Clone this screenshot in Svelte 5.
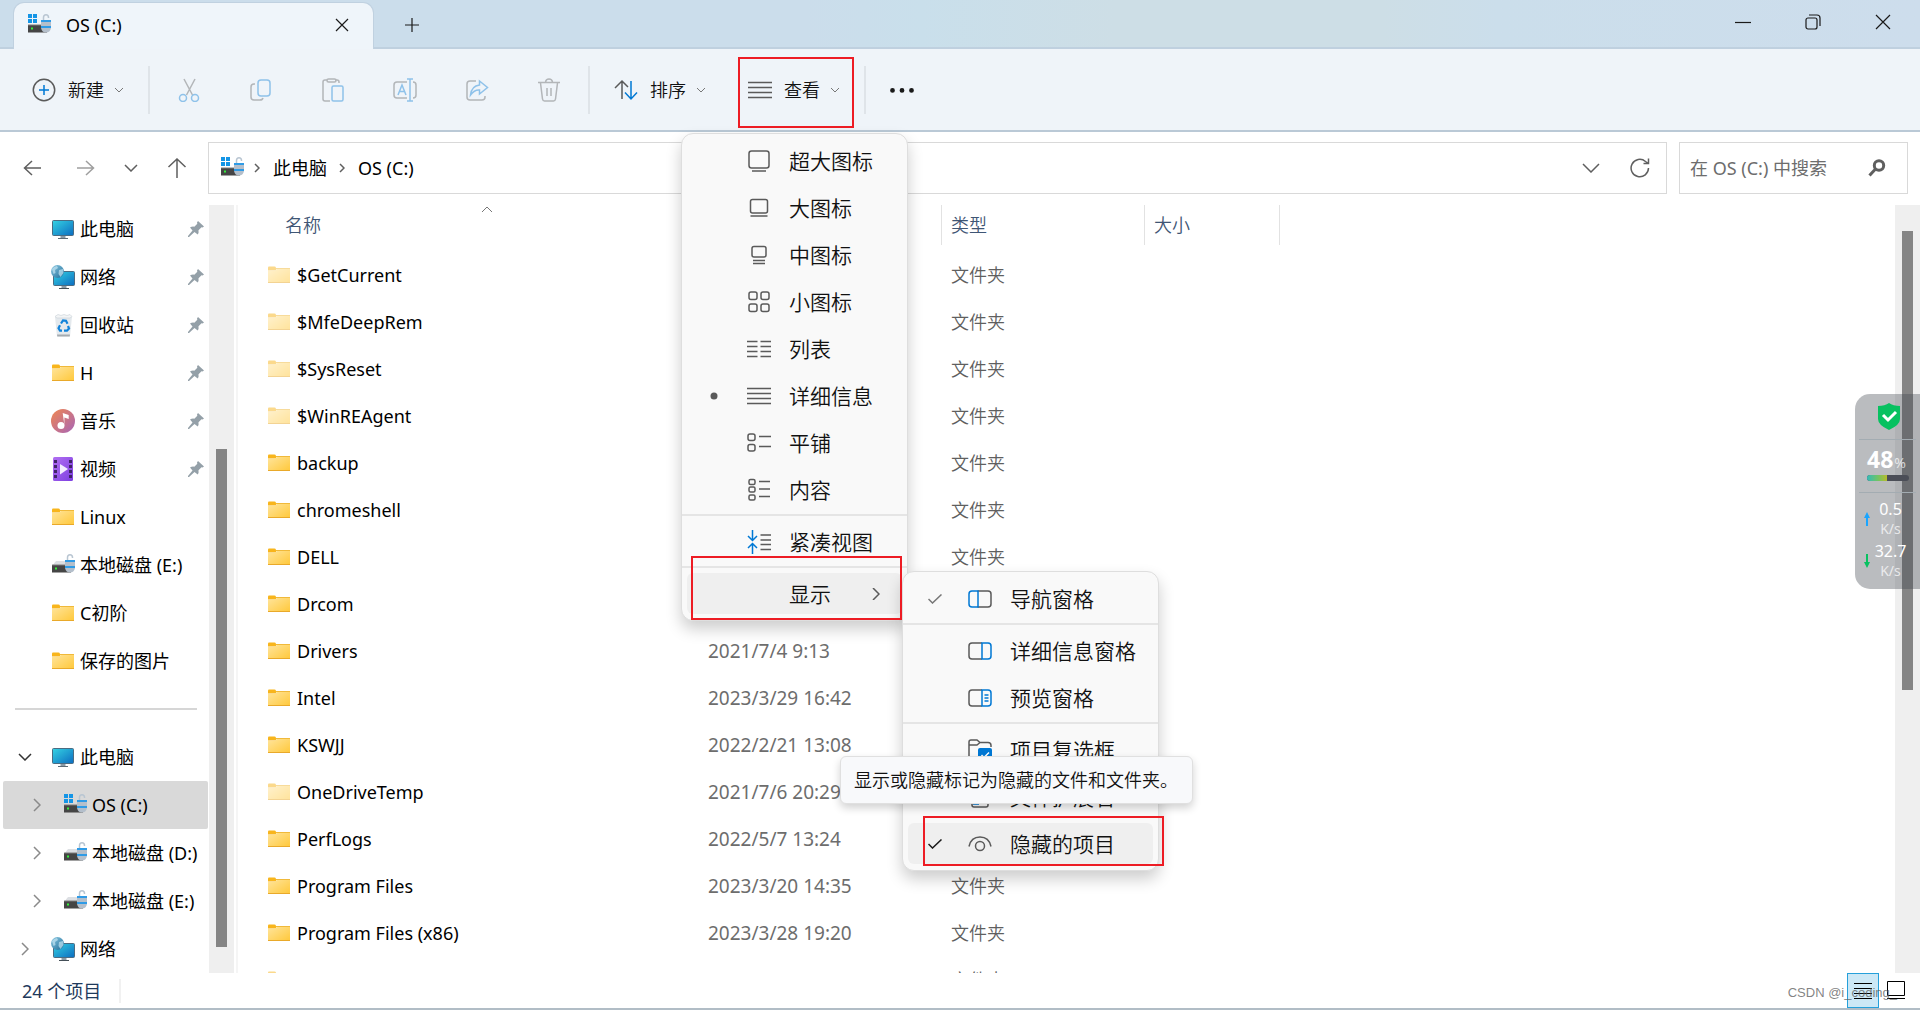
<!-- File explorer window with the view menu open -->
<script lang="ts">
  interface NavEntry {
    name: string;
    icon: string;
    pinned?: boolean;
    level?: number;
    expanded?: boolean;
    selected?: boolean;
  }
  interface MenuEntry {
    label?: string;
    icon?: string;
    mark?: string;
    separator?: boolean;
    active?: boolean;
    children?: MenuEntry[];
    tip?: string;
  }

  const quickAccess: NavEntry[] = [
    { name: '此电脑', icon: 'pc', pinned: true },
    { name: '网络', icon: 'network', pinned: true },
    { name: '回收站', icon: 'bin', pinned: true },
    { name: 'H', icon: 'folder', pinned: true },
    { name: '音乐', icon: 'music', pinned: true },
    { name: '视频', icon: 'video', pinned: true },
    { name: 'Linux', icon: 'folder' },
    { name: '本地磁盘 (E:)', icon: 'disk' },
    { name: 'C初阶', icon: 'folder' },
    { name: '保存的图片', icon: 'folder' },
  ];

  const tree: NavEntry[] = [
    { name: '此电脑', icon: 'pc', level: 0, expanded: true },
    { name: 'OS (C:)', icon: 'osdisk', level: 1, selected: true },
    { name: '本地磁盘 (D:)', icon: 'disk', level: 1 },
    { name: '本地磁盘 (E:)', icon: 'disk', level: 1 },
    { name: '网络', icon: 'network', level: 0 },
  ];

  const files = [
    { name: '$GetCurrent', date: '', hidden: true },
    { name: '$MfeDeepRem', date: '', hidden: true },
    { name: '$SysReset', date: '', hidden: true },
    { name: '$WinREAgent', date: '', hidden: true },
    { name: 'backup', date: '' },
    { name: 'chromeshell', date: '' },
    { name: 'DELL', date: '' },
    { name: 'Drcom', date: '' },
    { name: 'Drivers', date: '2021/7/4 9:13' },
    { name: 'Intel', date: '2023/3/29 16:42' },
    { name: 'KSWJJ', date: '2022/2/21 13:08' },
    { name: 'OneDriveTemp', date: '2021/7/6 20:29', hidden: true },
    { name: 'PerfLogs', date: '2022/5/7 13:24' },
    { name: 'Program Files', date: '2023/3/20 14:35' },
    { name: 'Program Files (x86)', date: '2023/3/28 19:20' },
    { name: 'ProgramData', date: '', hidden: true },
  ];

  const tools = [
    { icon: 'cut', label: '剪切' },
    { icon: 'copy', label: '复制' },
    { icon: 'paste', label: '粘贴' },
    { icon: 'rename', label: '重命名' },
    { icon: 'share', label: '共享' },
    { icon: 'trash', label: '删除' },
  ];

  const viewMenu: MenuEntry[] = [
    { label: '超大图标', icon: 'xl' },
    { label: '大图标', icon: 'large' },
    { label: '中图标', icon: 'medium' },
    { label: '小图标', icon: 'small' },
    { label: '列表', icon: 'list' },
    { label: '详细信息', icon: 'lines', mark: 'dot' },
    { label: '平铺', icon: 'tiles' },
    { label: '内容', icon: 'content' },
    { separator: true },
    { label: '紧凑视图', icon: 'compact' },
    { separator: true },
    {
      label: '显示',
      active: true,
      children: [
        { label: '导航窗格', icon: 'navpane', mark: 'check' },
        { separator: true },
        { label: '详细信息窗格', icon: 'detailpane' },
        { label: '预览窗格', icon: 'previewpane' },
        { separator: true },
        { label: '项目复选框', icon: 'checkboxes' },
        { label: '文件扩展名', icon: 'extension' },
        { label: '隐藏的项目', icon: 'eye', mark: 'check', active: true, tip: '显示或隐藏标记为隐藏的文件和文件夹。' },
      ],
    },
  ];

  // thumb position and size as a share of the track
  const navScroll = { top: 31.8, size: 64.8 };
  const listScroll = { top: 3.4, size: 59.8 };
  const memoryUsed = 48;
</script>

{#snippet chevron(cls: string)}
  <svg class="chevron {cls}" width="10" height="6" viewBox="0 0 10 6"><path d="M1 1l4 4 4-4" /></svg>
{/snippet}

{#snippet place(kind: string)}
  <svg class="place" width="24" height="24" viewBox="0 0 24 24">
    {#if kind === 'folder'}
      <path d="M1 4.500q0-1 1-1h5.500q1 0 1.500 1v3H1z" fill="#f8b51c" />
      <path d="M1 8h7l2-2.500h13V20H1z" fill="url(#folderFill)" />
      <path d="M9 5.500h14" stroke="#f0b93a" />
      <path d="M1 19.500h22" stroke="#e9a92a" />
    {:else if kind === 'pc'}
      <rect x="1.500" y="3.500" width="21" height="15" rx="1" fill="url(#screenFill)" stroke="#4b6c82" />
      <path d="M9.500 19h5v2h-5z" fill="#8b9aa5" />
      <path d="M7 21.500h10" stroke="#5c6a74" />
    {:else if kind === 'network'}
      <rect x="2.500" y="6.500" width="21" height="14" rx="1" fill="url(#screenFill)" stroke="#4b6c82" />
      <path d="M10.500 21h5v2h-5z" fill="#8b9aa5" />
      <path d="M8 23.500h10" stroke="#444f57" />
      <circle cx="6.500" cy="6.500" r="6.500" fill="url(#globeFill)" />
      <path d="M1 4q2-2.500 5-3l1 2-3 2 .5 3-2 1zM8 5l4-1 .5 4-3 4-2-3z" fill="#c3e4f2" opacity=".7" />
    {:else if kind === 'bin'}
      <path d="M4 3.500h17l-2 20H6z" fill="#e4e9ed" />
      <path d="M4 3.500l3-2 3 1 3-1 3 1 3-1 2 2-2 1.500H6z" fill="#f3f5f6" stroke="#cfd6db" stroke-width=".7" />
      <path d="M6 21.500h13l-.3 2H6.300z" fill="#a5abb0" />
      <path d="M10 10.500l2-3 3 .3 1.500 3M17 13l1 2.500-2 2.200h-3M11 17.700H9l-1.500-2.500 1.500-3" fill="none" stroke="#1183da" stroke-width="2.200" />
    {:else if kind === 'music'}
      <circle cx="12" cy="12" r="12" fill="url(#musicFill)" />
      <path d="M11.700 4l6 2v4l-4.300-1.500V16" fill="#fff" />
      <circle cx="10" cy="16.500" r="3.500" fill="#fff" />
    {:else if kind === 'video'}
      <rect x="2" width="20" height="24" rx="1.500" fill="url(#videoFill)" />
      <path d="M4.500 3v19M19.500 3v19" stroke="#402468" stroke-width="3" stroke-dasharray="3 2" />
      <path d="M9 7l8 5-8 5.500z" fill="#f3ecff" />
    {:else if kind === 'disk' || kind === 'osdisk'}
      {#if kind === 'osdisk'}
        <path d="M1 1h4v4H1zM6 1h4v4H6zM1 6h4v4H1zM6 6h4v4H6z" fill="#1495e6" />
      {:else}
        <path d="M5 8h14l4 5H1z" fill="#dcdfe3" />
      {/if}
      <rect x="1" y="12" width="19" height="7.500" fill="#454545" />
      <path d="M1 12h19" stroke="#7d7d7d" />
      <rect x="4" y="14.500" width="2" height="2" fill="#35f03c" />
      <path d="M16.500 8V4.500q0-2.800 2.500-2.800t2.500 2.800V5" fill="none" stroke="#b9c6d2" stroke-width="1.500" />
      <path d="M14 7h10v8q-1 4.500-5 4.500t-5-4.500z" fill="#b4bfcb" />
      <path d="M14 8h10M14 14h10" stroke="#2f9be6" stroke-width="2" />
    {/if}
  </svg>
{/snippet}

{#snippet glyph(kind: string)}
  <svg class="glyph" width="24" height="24" viewBox="0 0 24 24">
    {#if kind === 'new'}
      <circle cx="12" cy="12" r="10.700" /><path class="blue" d="M12 7v10M7 12h10" />
    {:else if kind === 'cut'}
      <path d="M7 1l8.500 16M18 1L9.500 17" /><circle class="blue" cx="6" cy="20" r="3.500" /><circle class="blue" cx="18" cy="20" r="3.500" />
    {:else if kind === 'copy'}
      <path d="M6 6H5Q2 6 2 9v10q0 3 3 3h6q2.500 0 3-2" /><rect class="blue" x="9" y="2" width="12" height="16" rx="3" />
    {:else if kind === 'paste'}
      <path d="M9 23H4q-2 0-2-2V4q0-2 2-2h2M14 2h2q2 0 2 2v1" /><rect x="6" y="1" width="9" height="3" rx="1.500" /><rect class="blue" x="11" y="8" width="11" height="15" rx="1.500" />
    {:else if kind === 'rename'}
      <path d="M14 4H4Q1 4 1 7v10q0 3 3 3h10M20 4q3 0 3 3v10q0 3-3 3" /><path class="blue" d="M5 17l4-10 4 10M6.500 13.500h5M17 1v22M14 1h6M14 23h6" />
    {:else if kind === 'share'}
      <path d="M11 3H5Q2 3 2 6v13q0 3 3 3h12q3 0 3-3v-1" /><path class="blue" d="M14.500 3l8 6.500-8 6.500v-4q-5-.5-9 5 1-9 9-10z" />
    {:else if kind === 'trash'}
      <path d="M1 4.500h22M3.500 5l2 16q.3 2 2 2h9q1.700 0 2-2l2-16M8.500 4Q9 1 12 1t3.500 3M10 10v8M14 10v8" />
    {:else if kind === 'sort'}
      <path d="M8 21V3M1 10l7-7 6 6" /><path class="blue" d="M17 3v18M11 14.500l6 6.500 6-6.500" />
    {:else if kind === 'lines'}
      <path d="M0 4.500h24M0 9.500h24M0 14.500h24M0 19.500h24" />
    {:else if kind === 'more'}
      <path class="solid" d="M2.500 10a2.400 2.400 0 1 1 0 4.800a2.400 2.400 0 1 1 0-4.800M12 10a2.400 2.400 0 1 1 0 4.800a2.400 2.400 0 1 1 0-4.800M21.500 10a2.400 2.400 0 1 1 0 4.800a2.400 2.400 0 1 1 0-4.800" />
    {:else if kind === 'xl'}
      <rect x="2" y="2" width="20" height="17" rx="2.500" /><path d="M5 22h14" />
    {:else if kind === 'large'}
      <rect x="3.500" y="3.500" width="17" height="13.500" rx="2" /><path d="M3.500 20h17" />
    {:else if kind === 'medium'}
      <rect x="5" y="3.500" width="14" height="10.500" rx="2" /><path d="M6 17.500h12M6 20.500h12" />
    {:else if kind === 'small'}
      <rect x="2" y="2" width="8" height="7.500" rx="2" /><rect x="14" y="2" width="8" height="7.500" rx="2" /><rect x="2" y="14" width="8" height="7.500" rx="2" /><rect x="14" y="14" width="8" height="7.500" rx="2" />
    {:else if kind === 'list'}
      <path d="M0 4.500h10.500M0 9.500h10.500M0 14.500h10.500M0 19.500h10.500M13.500 4.500H24M13.500 9.500H24M13.500 14.500H24M13.500 19.500H24" />
    {:else if kind === 'tiles'}
      <rect x="1" y="3" width="7" height="6.500" rx="2" /><rect x="1" y="13.500" width="7" height="6.500" rx="2" /><path d="M12 5.500h12M12 15.500h12" />
    {:else if kind === 'content'}
      <rect x="2" y="1.500" width="6" height="5" rx="1.500" /><rect x="2" y="9" width="6" height="5" rx="1.500" /><rect x="2" y="17" width="6" height="5" rx="1.500" /><path d="M12 3.500h11M12 11h11M12 18.500h11" />
    {:else if kind === 'compact'}
      <path class="blue" d="M5.500 0v10M1 6l4.500 4.500L10 6M5.500 24V14M1 18l4.500-4.500L10 18" /><path d="M13.500 5H24M13.500 10H24M13.500 14.500H24M13.500 19.500H24" />
    {:else if kind === 'navpane'}
      <path d="M9.500 4H20q3 0 3 3v10q0 3-3 3H9.500" /><path class="blue" d="M10 20H4q-3 0-3-3V7q0-3 3-3h6z" />
    {:else if kind === 'detailpane'}
      <path d="M14 4H4Q1 4 1 7v10q0 3 3 3h10" /><path class="blue" d="M14 4h6q3 0 3 3v10q0 3-3 3h-6z" />
    {:else if kind === 'previewpane'}
      <path d="M14 4H4Q1 4 1 7v10q0 3 3 3h10" /><path class="blue" d="M14 4h6q3 0 3 3v10q0 3-3 3h-6zM16.500 9h4M16.500 12h4M16.500 15h4" />
    {:else if kind === 'checkboxes'}
      <path d="M9 22H4q-3 0-3-3V4q0-2 2-2h6l3 2.500h8q3 0 3 3V9M1 7h8l3-2.500" /><rect class="bluefill" x="10" y="10" width="14" height="14" rx="2" /><path class="white" d="M13.500 17l2.500 2.500 5-5" />
    {:else if kind === 'extension'}
      <path d="M4 10V4q0-2 2-2h9l5 5v13q0 2-2 2H6q-2 0-2-2v-3" /><path class="blue" d="M5 19h6" />
    {:else if kind === 'eye'}
      <path d="M1 14.500Q3 5 12 5t11 9.500" /><circle cx="12" cy="14" r="4.500" />
    {/if}
  </svg>
{/snippet}

{#snippet menuList(entries: MenuEntry[])}
  {#each entries as entry}
    {#if entry.separator}
      <li class="separator" role="separator"></li>
    {:else}
      <li class:outlined={entry.active} class:parent={entry.children}>
        <button class="menu-item" class:active={entry.active}>
          <span class="mark">
            {#if entry.mark === 'dot'}
              <svg width="8" height="8" viewBox="0 0 8 8"><circle cx="4" cy="4" r="3.500" fill="#5a5a5a" /></svg>
            {:else if entry.mark === 'check'}
              <svg class:strong={entry.active} width="14" height="10" viewBox="0 0 14 10"><path d="M.5 5l4 4 9-8.500" /></svg>
            {/if}
          </span>
          <span class="icon">{#if entry.icon}{@render glyph(entry.icon)}{/if}</span>
          <span class="label">{entry.label}</span>
          {#if entry.children}
            <svg class="arrow" width="8" height="12" viewBox="0 0 8 12"><path d="M1 0l6 6-6 6" /></svg>
          {/if}
        </button>
        {#if entry.tip}
          <div class="tooltip" role="tooltip">{entry.tip}</div>
        {/if}
        {#if entry.children}
          <ul class="menu submenu">
            {@render menuList(entry.children)}
          </ul>
        {/if}
      </li>
    {/if}
  {/each}
{/snippet}

{#snippet navRow(entry: NavEntry)}
  <li>
    <a href="#{entry.name}" class="nav-row" class:child={entry.level === 1} class:selected={entry.selected}>
      <span class="twist">
        {#if entry.expanded}
          <svg width="14" height="8" viewBox="0 0 14 8"><path class="dark" d="M1 1l6 6 6-6" /></svg>
        {:else if entry.level !== undefined}
          <svg width="8" height="14" viewBox="0 0 8 14"><path d="M1 1l6 6-6 6" /></svg>
        {/if}
      </span>
      {@render place(entry.icon)}
      <span class="nav-name">{entry.name}</span>
      {#if entry.pinned}
        <svg class="pin" width="16" height="16" viewBox="0 0 16 16"><path d="M10 0l6 5.500-1.500 1-1-.2-3 3q.5 2.500-.8 4.200L6.500 11 1 16H0v-1l4.500-5.500L2 6.500q2-1.200 4.300-.8l3-3L9 1.500z" /></svg>
      {/if}
    </a>
  </li>
{/snippet}

<svg class="defs" width="0" height="0">
  <defs>
    <linearGradient id="folderFill" x2="1" y2="1"><stop stop-color="#ffe59d" /><stop offset="1" stop-color="#ffc83a" /></linearGradient>
    <linearGradient id="screenFill" x2="1" y2="1"><stop stop-color="#35d3e3" /><stop offset="1" stop-color="#0c6cc0" /></linearGradient>
    <linearGradient id="globeFill" x2="1" y2="1"><stop stop-color="#8fcbe4" /><stop offset="1" stop-color="#1c6c98" /></linearGradient>
    <linearGradient id="musicFill" x2="1" y2="1"><stop stop-color="#f08650" /><stop offset="1" stop-color="#a765b8" /></linearGradient>
    <linearGradient id="videoFill" x2="1" y2="1"><stop stop-color="#b16ff2" /><stop offset="1" stop-color="#7d3fe0" /></linearGradient>
  </defs>
</svg>

<div class="window">
  <header class="titlebar">
    <div class="tab">
      {@render place('osdisk')}
      <span class="tab-name">OS (C:)</span>
      <button aria-label="关闭标签页"><svg width="14" height="14" viewBox="0 0 14 14"><path d="M1 1l12 12M13 1L1 13" /></svg></button>
    </div>
    <button class="new-tab" aria-label="新标签页"><svg width="16" height="16" viewBox="0 0 16 16"><path d="M8 1v14M1 8h14" /></svg></button>
    <div class="window-buttons">
      <button aria-label="最小化"><svg width="16" height="16" viewBox="0 0 16 16"><path d="M0 8.500h16" /></svg></button>
      <button aria-label="还原"><svg width="16" height="16" viewBox="0 0 16 16"><rect x="1" y="4" width="11" height="11" rx="2" /><path d="M4 1h8q3 0 3 3v8" /></svg></button>
      <button aria-label="关闭"><svg width="16" height="16" viewBox="0 0 16 16"><path d="M1 1l14 14M15 1L1 15" /></svg></button>
    </div>
  </header>

  <div class="ribbon">
    <button class="command">{@render glyph('new')}<span>新建</span>{@render chevron('small')}</button>
    <span class="rule"></span>
    {#each tools as tool}
      <button class="tool" aria-label={tool.label} disabled>{@render glyph(tool.icon)}</button>
    {/each}
    <span class="rule"></span>
    <button class="command">{@render glyph('sort')}<span>排序</span>{@render chevron('small')}</button>
    <div class="view">
      <button class="command">{@render glyph('lines')}<span>查看</span>{@render chevron('small')}</button>
      <ul class="menu">
        {@render menuList(viewMenu)}
      </ul>
    </div>
    <span class="rule"></span>
    <button class="more" aria-label="查看更多">{@render glyph('more')}</button>
  </div>

  <div class="location">
    <button class="step" aria-label="后退"><svg width="18" height="16" viewBox="0 0 18 16"><path d="M9 1L1.500 8 9 15M1.500 8H18" /></svg></button>
    <button class="step off" aria-label="前进"><svg width="18" height="16" viewBox="0 0 18 16"><path d="M9 1l7.500 7L9 15M16.500 8H0" /></svg></button>
    <button class="recent" aria-label="最近位置"><svg width="14" height="8" viewBox="0 0 14 8"><path d="M1 1l6 6 6-6" /></svg></button>
    <button class="step up" aria-label="向上"><svg width="20" height="20" viewBox="0 0 20 20"><path d="M1.500 9L10 1l8.500 8M10 1v19" /></svg></button>
    <nav class="address" aria-label="地址">
      {@render place('osdisk')}
      <svg class="crumb" width="6" height="10" viewBox="0 0 6 10"><path d="M1 1l4 4-4 4" /></svg>
      <a href="#pc">此电脑</a>
      <svg class="crumb" width="6" height="10" viewBox="0 0 6 10"><path d="M1 1l4 4-4 4" /></svg>
      <a href="#c">OS (C:)</a>
      <button class="history" aria-label="以前的位置"><svg width="18" height="10" viewBox="0 0 18 10"><path d="M1 1l8 8 8-8" /></svg></button>
      <button class="refresh" aria-label="刷新"><svg width="20" height="20" viewBox="0 0 20 20"><path d="M18.500 10A8.700 8.700 0 1 1 15.500 3.500L18.500 5.500M18.500.5v5h-5" /></svg></button>
    </nav>
    <div class="search">
      <input type="text" aria-label="搜索" placeholder="在 OS (C:) 中搜索" />
      <svg width="18" height="18" viewBox="0 0 18 18"><circle cx="11" cy="6.500" r="4.700" /><path d="M7.500 10L1.500 16.500" /></svg>
    </div>
  </div>

  <div class="body">
    <nav class="sidebar" aria-label="导航窗格">
      <ul>
        {#each quickAccess as entry}
          {@render navRow(entry)}
        {/each}
      </ul>
      <hr />
      <ul>
        {#each tree as entry}
          {@render navRow(entry)}
        {/each}
      </ul>
    </nav>
    <div class="scrollbar"><span style="top: {navScroll.top}%; height: {navScroll.size}%"></span></div>

    <main>
      <table>
        <thead>
          <tr>
            <th class="name">
              <button>名称</button>
              <svg class="sorted" width="12" height="7" viewBox="0 0 12 7"><path d="M1 6l5-5 5 5" /></svg>
            </th>
            <th class="date"><button aria-label="修改日期"></button></th>
            <th class="type"><button>类型</button></th>
            <th class="size"><button>大小</button></th>
            <th></th>
          </tr>
        </thead>
        <tbody>
          {#each files as file}
            <tr class:dim={file.hidden}>
              <td class="name"><div>{@render place('folder')}{file.name}</div></td>
              <td class="modified">{file.date}</td>
              <td>文件夹</td>
              <td></td>
              <td></td>
            </tr>
          {/each}
        </tbody>
      </table>
    </main>
    <div class="scrollbar"><span style="top: {listScroll.top}%; height: {listScroll.size}%"></span></div>
  </div>

  <footer>
    <span class="count">24 个项目</span>
    <span class="watermark">CSDN @i_coding_</span>
    <button class="mode current" aria-label="详细信息视图"><svg width="18" height="18" viewBox="0 0 18 18"><path d="M0 1.500h18M0 6.500h18M0 11.500h18M0 16.500h18" /></svg></button>
    <button class="mode" aria-label="缩略图视图"><svg width="18" height="19" viewBox="0 0 18 19"><path d="M.5.500h17v14H.5zM0 17.500h18" /></svg></button>
  </footer>

  <aside class="monitor">
    <svg width="22" height="27" viewBox="0 0 22 27"><path d="M11 0q4 3 11 3v13q0 6-11 11Q0 22 0 16V3q7 0 11-3z" fill="#07c160" /><path d="M5 12l5 5 8-8" fill="none" stroke="#fff" stroke-width="3" /></svg>
    <div class="memory">
      <p><strong>{memoryUsed}</strong><small>%</small></p>
      <div class="meter"><span style="width: {memoryUsed}%"></span></div>
    </div>
    <div class="speed">
      <svg width="6" height="14" viewBox="0 0 6 14"><path d="M3 0l3 6H4v8H2V6H0z" fill="#1aa5ff" /></svg>
      <p>0.5<small>K/s</small></p>
    </div>
    <div class="speed">
      <svg width="6" height="14" viewBox="0 0 6 14"><path d="M3 14l3-6H4V0H2v8H0z" fill="#07c160" /></svg>
      <p>32.7<small>K/s</small></p>
    </div>
  </aside>
</div>

<style>
  :global(body) {
    margin: 0;
    background: #fff;
  }

  .window {
    position: relative;
    display: flex;
    flex-direction: column;
    height: 100vh;
    box-sizing: border-box;
    border-bottom: 2px solid #b1bdc6;
    overflow: hidden;
    font: 18px/24px 'Noto Sans', 'Noto Sans CJK SC', sans-serif;
    color: #000;
  }

  .defs {
    position: absolute;
  }

  button {
    display: flex;
    align-items: center;
    justify-content: center;
    padding: 0;
    border: 0;
    background: none;
    font: inherit;
    color: inherit;
  }

  a {
    color: inherit;
    text-decoration: none;
  }

  ul {
    margin: 0;
    padding: 0;
    list-style: none;
  }

  svg {
    flex: none;
    fill: none;
    stroke-width: 1.5;
  }

  .place {
    stroke-width: 1;
  }

  .glyph {
    stroke: #5a5a5a;
  }

  .glyph .blue {
    stroke: #0078d4;
  }

  .glyph .solid {
    fill: #1a1a1a;
    stroke: none;
  }

  .glyph .bluefill {
    fill: #0078d4;
    stroke: none;
  }

  .glyph .white {
    stroke: #fff;
  }

  .chevron {
    stroke: #777;
    stroke-width: 1;
  }

  /* title bar */
  .titlebar {
    display: flex;
    height: 47px;
    padding-left: 13px;
    border-bottom: 2px solid #bfd0df;
    background: linear-gradient(90deg, #cbddeb 0%, #cbddeb 42%, #c9dfeb 48%, #cddee6 58%, #cddee6 72%, #cbdeeb 78%, #cdddec 100%);
  }

  .tab {
    position: relative;
    display: flex;
    align-items: center;
    width: 361px;
    height: 47px;
    margin-top: 2px;
    border: 1px solid #c0d1e0;
    border-bottom: 0;
    border-radius: 11px 11px 0 0;
    background: #eff5fa;
    box-sizing: border-box;
    padding: 0 24px 2px 13px;
  }

  .tab-name {
    flex: 1;
    margin-left: 15px;
  }

  .titlebar svg:not(.place) {
    stroke: #1a1a1a;
    stroke-width: 1.2;
  }

  .new-tab {
    width: 76px;
    height: 50px;
  }

  .window-buttons {
    display: flex;
    margin-left: auto;
    margin-right: 2px;
    height: 43px;
  }

  .window-buttons button {
    width: 70px;
  }

  /* command bar */
  .ribbon {
    display: flex;
    align-items: stretch;
    height: 81px;
    padding-left: 11px;
    border-bottom: 2px solid #bac9d6;
    background: #eff4f9;
    font-weight: 350;
  }

  .command {
    gap: 12px;
    height: 100%;
    padding: 0 21px;
    color: #111;
  }

  .command .chevron {
    margin-left: -2px;
  }

  .tool {
    width: 72px;
    opacity: 0.4;
  }

  .rule {
    width: 2px;
    height: 48px;
    margin: auto 3px;
    background: #dfe4e9;
  }

  .more {
    width: 66px;
  }

  .view {
    position: relative;
    z-index: 2;
  }

  .view::after,
  .outlined::after {
    content: '';
    position: absolute;
    inset: 8px 7px 2px 11px;
    border: 2px solid #ed1c24;
    pointer-events: none;
  }

  /* menus */
  .menu {
    position: absolute;
    top: 84px;
    left: -46px;
    display: flex;
    flex-direction: column;
    width: 227px;
    box-sizing: border-box;
    padding: 3px 0;
    border: 1px solid #dedede;
    border-radius: 12px;
    background: #f9f9f9;
    box-shadow: 0 8px 16px rgba(0, 0, 0, 0.2);
  }

  .submenu {
    top: -2px;
    left: 100%;
    width: 257px;
  }

  .menu li {
    position: relative;
    margin: 3px 5px;
  }

  .menu .separator {
    height: 2px;
    margin: 1px 0 2px;
    background: #e5e5e5;
  }

  .menu li.outlined::after {
    inset: -7px -11px -2px 15px;
  }

  .menu li.parent::after {
    inset: -17px 0 -6px 4px;
  }

  .menu-item {
    display: grid;
    grid-template-columns: 53px 38px 1fr auto;
    width: 100%;
    height: 41px;
    border-radius: 6px;
    font-size: 21px;
    text-align: left;
    color: #111;
  }

  .menu-item.active {
    background: #efefef;
  }

  .mark,
  .icon {
    display: flex;
    justify-content: center;
  }

  .mark svg {
    stroke: #777;
  }

  .mark svg.strong {
    stroke: #1a1a1a;
  }

  .mark circle {
    stroke: none;
  }

  .label {
    padding-left: 11px;
    white-space: nowrap;
  }

  .arrow {
    margin-right: 22px;
    stroke: #5a5a5a;
  }

  .tooltip {
    position: absolute;
    z-index: 3;
    top: -67px;
    left: -68px;
    padding: 11px 14px 11px 13px;
    border: 1px solid #e0e0e0;
    border-radius: 6px;
    background: #f8f9fb;
    box-shadow: 0 4px 8px rgba(0, 0, 0, 0.18);
    white-space: nowrap;
    color: #111;
  }

  /* location bar */
  .location {
    display: flex;
    height: 52px;
    padding: 10px 12px 11px 5px;
  }

  .location svg {
    stroke: #5f5f5f;
  }

  .location .place {
    stroke: none;
  }

  .step {
    width: 54px;
  }

  .step.off {
    opacity: 0.6;
  }

  .step.up {
    width: 59px;
    padding-right: 3px;
  }

  .recent {
    width: 36px;
  }

  .address {
    display: flex;
    flex: 1;
    align-items: center;
    padding: 0 10px 0 11px;
    border: 1px solid #d9d9d9;
  }

  .address .place {
    margin-right: 10px;
  }

  .crumb {
    margin-right: 13px;
  }

  .address a + .crumb {
    margin-left: 12px;
  }

  .history {
    width: 50px;
    margin-left: auto;
  }

  .refresh {
    width: 32px;
    margin-left: 8px;
  }

  .search {
    display: flex;
    align-items: center;
    width: 229px;
    box-sizing: border-box;
    margin-left: 12px;
    padding: 0 21px 0 10px;
    border: 1px solid #d9d9d9;
  }

  .search input {
    flex: 1;
    min-width: 0;
    padding: 0;
    border: 0;
    outline: 0;
    background: none;
    font: inherit;
  }

  .search input::placeholder {
    color: #6d6d6d;
    opacity: 1;
  }

  .search svg {
    stroke-width: 3;
  }

  /* panes */
  .body {
    display: flex;
    flex: 1;
    min-height: 0;
  }

  .sidebar {
    width: 209px;
    overflow: hidden;
  }

  .nav-row {
    display: flex;
    align-items: center;
    height: 48px;
    margin: 0 1px 0 3px;
    border-radius: 2px;
  }

  .nav-row.selected {
    background: #d9d9d9;
  }

  .twist {
    display: flex;
    justify-content: center;
    width: 44px;
    margin-right: 4px;
    stroke: #8a8a8a;
  }

  .twist .dark {
    stroke: #333;
  }

  .child .twist {
    width: 68px;
    margin-right: -8px;
  }

  .nav-name {
    flex: 1;
    margin-left: 5px;
    white-space: nowrap;
  }

  .pin {
    margin-right: 4px;
    fill: #94a0a8;
  }

  hr {
    height: 2px;
    margin: 23px 12px 23px 15px;
    border: 0;
    background: #d6d6d6;
  }

  .scrollbar {
    position: relative;
    width: 25px;
    background: #efefef;
  }

  .scrollbar span {
    position: absolute;
    left: 7px;
    width: 11px;
    background: #858585;
  }

  main {
    flex: 1;
    margin-left: 2px;
    border-left: 2px solid #f5f5f5;
    padding-left: 1px;
    overflow: hidden;
  }

  table {
    width: 100%;
    table-layout: fixed;
    border-collapse: collapse;
  }

  th {
    position: relative;
    height: 46px;
    padding: 0;
    vertical-align: top;
    font-weight: 350;
  }

  th button {
    justify-content: flex-start;
    width: 100%;
    height: 40px;
    padding-left: 9px;
    border-right: 1px solid #e2e2e2;
    color: #3f5675;
  }

  th.name {
    width: 460px;
  }

  th.name button {
    padding-left: 46px;
    border-right: 0;
  }

  th.date {
    width: 243px;
  }

  th.type {
    width: 203px;
  }

  th.size {
    width: 135px;
  }

  .sorted {
    position: absolute;
    top: 1px;
    left: 242px;
    stroke: #777;
    stroke-width: 1;
  }

  td {
    height: 47px;
    padding: 0 0 0 9px;
    font-weight: 350;
    color: #5f5f5f;
    white-space: nowrap;
  }

  td.modified {
    font-size: 19px;
    font-weight: 400;
    color: #6d6d6d;
  }

  td.name {
    padding-left: 28px;
    font-weight: 400;
    color: #000;
  }

  td.name div {
    display: flex;
    align-items: center;
    gap: 6px;
  }

  .dim .place {
    opacity: 0.5;
  }

  /* status bar */
  footer {
    display: flex;
    align-items: center;
    height: 35px;
    padding: 0 8px 0 22px;
    color: #1e395b;
  }

  .count {
    padding-right: 18px;
    border-right: 2px solid #f1f1f1;
  }

  .mode {
    width: 32px;
    height: 35px;
    box-sizing: border-box;
    stroke: #000;
  }

  .mode.current {
    border: 1px solid #26a0da;
    background: #cce8f6;
  }

  .mode svg {
    stroke-width: 1;
  }

  .watermark {
    position: relative;
    margin: 4px -50px 0 auto;
    font: 13px/16px 'Liberation Sans', sans-serif;
    color: rgba(90, 90, 90, 0.75);
    pointer-events: none;
  }

  .mode.current + .mode {
    margin-left: 1px;
  }

  /* floating system monitor */
  .monitor {
    position: absolute;
    top: 394px;
    right: 0;
    display: flex;
    flex-direction: column;
    align-items: center;
    width: 65px;
    height: 195px;
    box-sizing: border-box;
    padding-top: 9px;
    border-radius: 15px 0 0 15px;
    background: rgba(65, 68, 78, 0.36);
    color: #fff;
  }

  .monitor > svg {
    margin-left: 3px;
  }

  .memory {
    width: 57px;
    height: 54px;
    margin: 9px 0 5px;
    border-top: 1px solid #a3acb2;
    border-bottom: 1px solid #a3acb2;
    box-sizing: border-box;
    padding: 7px 0 0 8px;
  }

  .memory p {
    display: flex;
    align-items: baseline;
    gap: 1px;
    height: 24px;
    margin: 0;
  }

  .memory strong {
    font-size: 23px;
  }

  .memory small,
  .speed small {
    font-size: 14px;
    opacity: 0.7;
  }

  .meter {
    width: 42px;
    height: 6px;
    margin-top: 4px;
    border-radius: 3px;
    background: #4b4e57;
    overflow: hidden;
  }

  .meter span {
    display: block;
    height: 100%;
    background: linear-gradient(90deg, #35b9b9, #6cc46a, #b7bb2c);
  }

  .speed {
    display: flex;
    align-items: center;
    width: 47px;
    height: 42px;
  }

  .speed p {
    flex: 1;
    margin: 0;
    font-size: 16px;
    line-height: 20px;
    text-align: center;
  }

  .speed small {
    display: block;
  }
</style>
